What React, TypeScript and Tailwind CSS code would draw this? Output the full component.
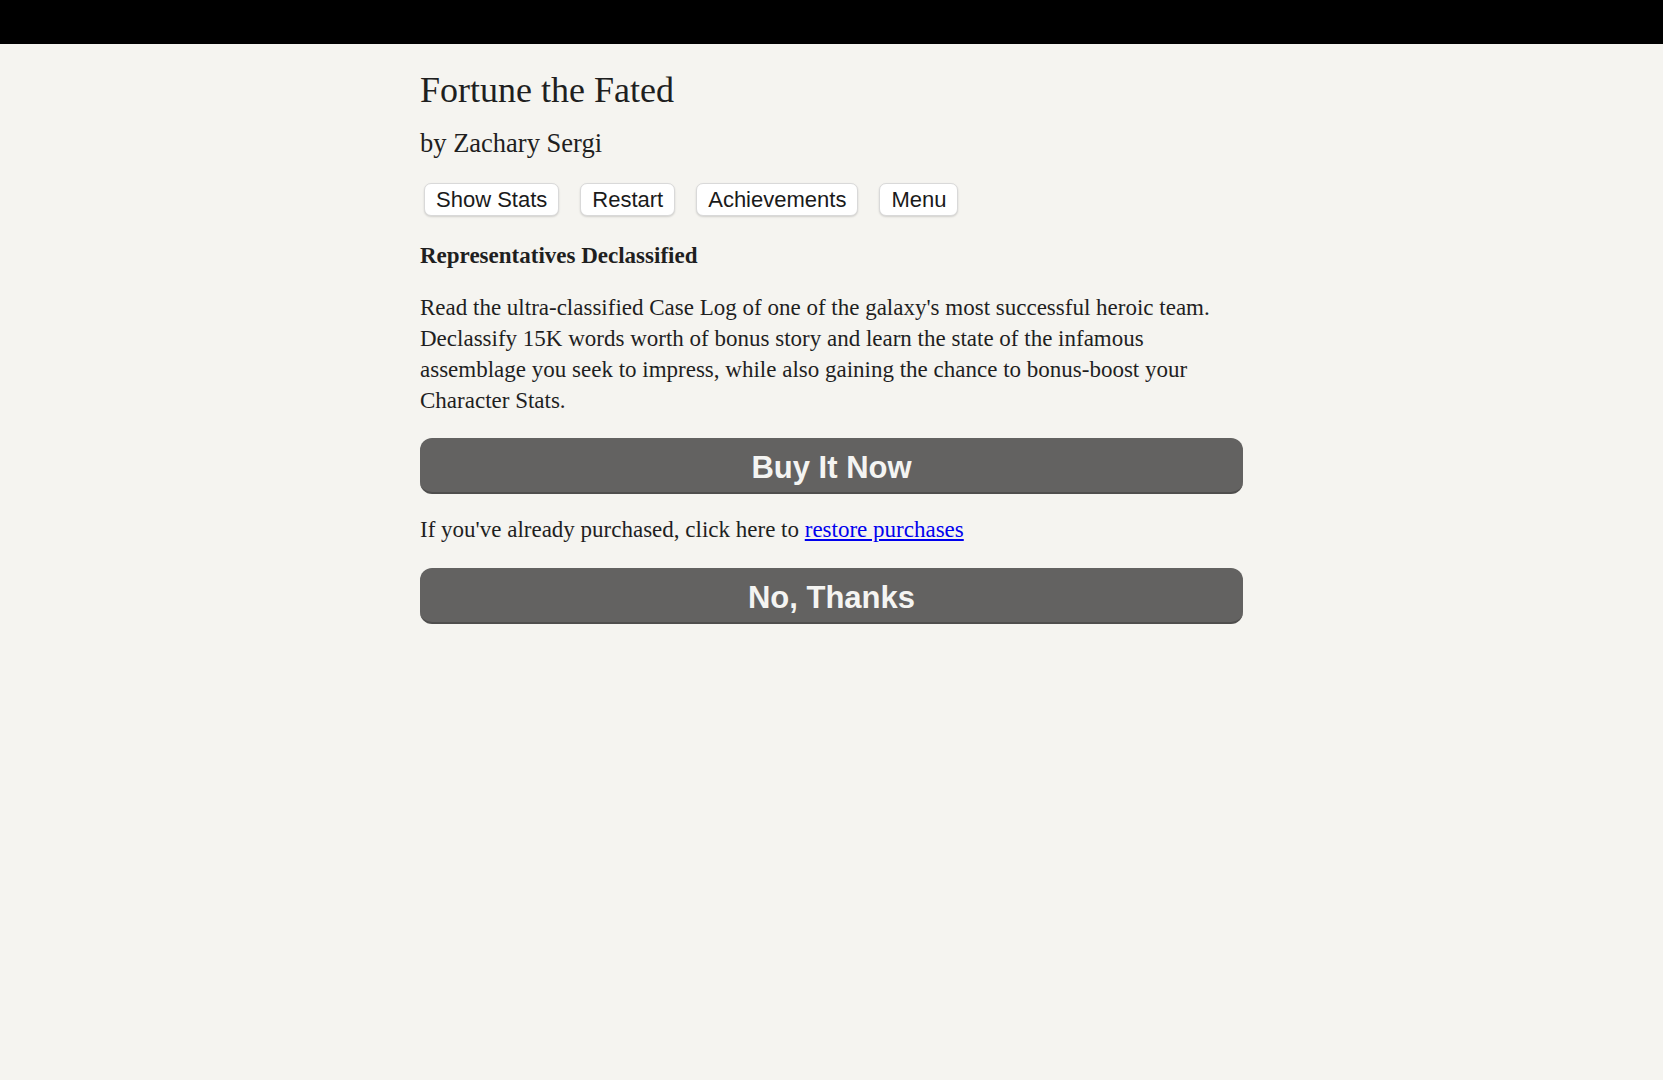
import { useState } from 'react'

const serif = "font-['Liberation_Serif','Times_New_Roman',serif]"
const sans = "font-['Liberation_Sans',Arial,sans-serif]"

const NAV = ['Show Stats', 'Restart', 'Achievements', 'Menu']

function NavButton({ label }: { label: string }) {
  return (
    <button
      className={`${sans} h-[33px] rounded-[7px] border border-[#d9d9d9] bg-white px-[11px] text-[22px] leading-none text-[#1a1a1a] shadow-[0_1px_2px_rgba(0,0,0,0.15)]`}
    >
      {label}
    </button>
  )
}

function BigButton({ label, onClick }: { label: string; onClick?: () => void }) {
  return (
    <button
      onClick={onClick}
      className={`${sans} h-[56px] w-full rounded-[12px] border-b-2 border-[#4f4e4d] bg-[#636261] pt-[6px] text-[31px] font-bold text-[#f4f4f2]`}
    >
      {label}
    </button>
  )
}

export default function App() {
  const [declined, setDeclined] = useState(false)

  return (
    <div className="min-h-screen bg-[#f5f4f0] text-[#1f1f1f]">
      <div className="h-[44px] bg-black" />
      <main className={`${serif} ml-[420px] w-[823px] pt-[22px]`}>
        <h1 className="text-[36px] leading-[48px]">Fortune the Fated</h1>
        <p className="mt-[11px] text-[26.5px] leading-[36px]">by Zachary Sergi</p>

        <nav className="mt-[22px] flex gap-[21px] pl-[4px]">
          {NAV.map((label) => (
            <NavButton key={label} label={label} />
          ))}
        </nav>

        <h2 className="mt-[24px] text-[23px] font-bold leading-[31px]">Representatives Declassified</h2>

        <p className="mt-[21px] text-[23px] leading-[31px]">
          Read the ultra-classified Case Log of one of the galaxy's most successful heroic team.
          Declassify 15K words worth of bonus story and learn the state of the infamous assemblage you
          seek to impress, while also gaining the chance to bonus-boost your Character Stats.
        </p>

        <div className="mt-[22px]">
          <BigButton label="Buy It Now" />
        </div>

        <p className="mt-[20px] text-[23px] leading-[31px]">
          If you've already purchased, click here to{' '}
          <a href="#" className="text-[#0000ee] underline">
            restore purchases
          </a>
        </p>

        <div className="mt-[23px]">
          <BigButton label="No, Thanks" onClick={() => setDeclined(!declined)} />
        </div>
      </main>
    </div>
  )
}
